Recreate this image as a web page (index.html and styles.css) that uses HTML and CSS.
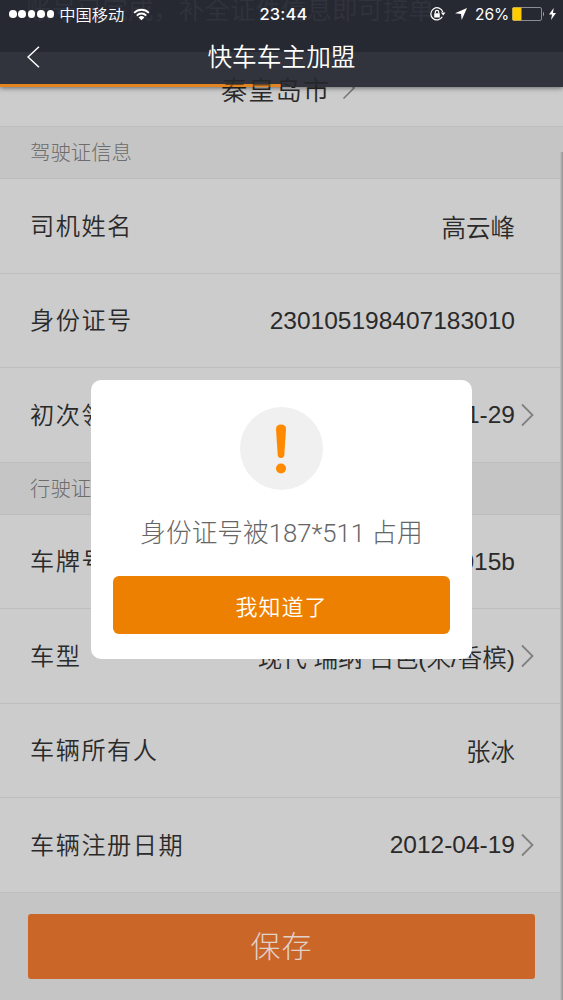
FILE: index.html
```html
<!DOCTYPE html>
<html lang="zh-CN">
<head>
<meta charset="utf-8">
<title>快车车主加盟</title>
<link rel="stylesheet" href="styles.css">
</head>
<body>
<div class="screen">
  <main class="page">
    <div class="city"><span>秦皇岛市</span><svg class="city-arrow" viewBox="0 0 14 24"><path d="M1.5 1.500 12 12 1.500 22.500"/></svg></div>
    <h2 class="section">驾驶证信息</h2>
    <div class="row"><span class="label">司机姓名</span><span class="value">高云峰</span></div>
    <div class="row"><span class="label">身份证号</span><span class="value">230105198407183010</span></div>
    <div class="row last"><span class="label">初次领证</span><span class="value">2011-01-29</span><svg class="arrow" viewBox="0 0 13 24"><path d="M1 1.500 11.500 12 1 22.500"/></svg></div>
    <h2 class="section">行驶证信息</h2>
    <div class="row"><span class="label">车牌号</span><span class="value">c8015b</span></div>
    <div class="row"><span class="label">车型</span><span class="value">现代 瑞纳 白色(米/香槟)</span><svg class="arrow" viewBox="0 0 13 24"><path d="M1 1.500 11.500 12 1 22.500"/></svg></div>
    <div class="row"><span class="label">车辆所有人</span><span class="value">张冰</span></div>
    <div class="row last"><span class="label">车辆注册日期</span><span class="value">2012-04-19</span><svg class="arrow" viewBox="0 0 13 24"><path d="M1 1.500 11.500 12 1 22.500"/></svg></div>
    <div class="footer"><button class="save">保存</button></div>
  </main>

  <header class="header">
    <p class="banner">账号已完成，补全证件信息即可接单</p>
    <div class="status">
      <span class="dots"><i></i><i></i><i></i><i></i><i></i></span>
      <span class="carrier">中国移动</span>
      <svg class="wifi" viewBox="0 0 18 13"><path d="M1.200 4.700a11 11 0 0 1 15.600 0M4 7.600a7 7 0 0 1 10 0"/><path class="fill" d="M9 12.700 5.900 9.600a4.400 4.400 0 0 1 6.200 0z"/></svg>
      <span class="time">23:44</span>
      <span class="right">
        <svg class="lock" viewBox="0 0 16 14"><path d="M12.800 5A6.100 6.100 0 1 0 12.300 9.800"/><path class="fill" d="M10.800 5.600h4.700l-2.300 3zM4.200 6.300h5.600v4.100H4.200z"/><path d="M5.300 6.300V5a1.700 1.700 0 0 1 3.400 0v1.300"/></svg>
        <svg class="locate" viewBox="0 0 12 12"><path d="M12 0 6.700 12 6 6 0 5.200z"/></svg>
        <span class="percent">26%</span>
        <svg class="battery" viewBox="0 0 33 14"><rect class="shell" x=".5" y=".5" width="29" height="13" rx="1.500"/><rect class="charge" x=".5" y=".5" width="9" height="13" rx="1"/><path class="cap" d="M31 4.500q2 2.500 0 5z"/></svg>
        <svg class="bolt" viewBox="0 0 7 12"><path d="M4.700 0 0 6.600h3L2 12l5-7H4z"/></svg>
      </span>
    </div>
    <div class="nav">
      <svg class="back" viewBox="0 0 13 22"><path d="M12 .8 1 11 12 21.200"/></svg>
      <h1 class="title">快车车主加盟</h1>
    </div>
    <div class="progress"></div>
    <span class="city-ghost">秦皇岛市</span>
  </header>

  <section class="dialog" role="alertdialog">
    <div class="badge"><svg class="mark" viewBox="0 0 12 50"><path d="M1 5q0-4.500 5-4.500T11 5L9.300 31q-.3 3-3.300 3t-3.300-3z"/><circle cx="6" cy="44.500" r="5"/></svg></div>
    <p class="message">身份证号被187*511 占用</p>
    <button class="confirm">我知道了</button>
  </section>
</div>
</body>
</html>
```
FILE: styles.css
```css
* { box-sizing: border-box; margin: 0; padding: 0; }
body { font-family: "Liberation Sans", "Noto Sans CJK SC", sans-serif; color: #2a2a2a; }
svg { display: block; fill: none; stroke-width: 1.5; flex: none; }
button { border: 0; font-family: inherit; display: block; }
.screen { position: relative; width: 563px; height: 1000px; overflow: hidden; background: #c5c5c5; }
.page { height: 1000px; display: flex; flex-direction: column; }
.page::after { content: ""; position: absolute; right: 0; top: 152px; bottom: 0; width: 3px; background: linear-gradient(90deg, #c2c2c2, #929292); }
.city { height: 127px; padding: 73px 0 0 221px; display: flex; gap: 12px; background: #ccc; border-bottom: 1px solid #bebebe; font-size: 26.300px; line-height: 36px; font-weight: 350; letter-spacing: 1px; }
.city-arrow { width: 14px; height: 24px; margin-top: 3px; stroke: #777; }
.section { height: 52px; padding-left: 30px; border-bottom: 1px solid #bcbcbc; font-size: 20.400px; line-height: 52px; font-weight: 300; color: #6c6c6c; }
.row { height: 94.500px; position: relative; display: flex; align-items: center; justify-content: space-between; padding: 0 48px 0 30px; background: #ccc; border-bottom: 1px solid #bebebe; font-weight: 350; }
.label { font-size: 24.200px; letter-spacing: 1.500px; padding-bottom: 3px; }
.value { font-size: 24.500px; white-space: nowrap; padding-top: 1px; }
.arrow { position: absolute; right: 29px; top: 35px; width: 13px; height: 24px; stroke: #808080; stroke-width: 1.800; }
.footer { flex: 1; padding: 21px 28px 0; }
.save { width: 507px; height: 65px; padding-bottom: 5px; border-radius: 3px; background: #cb6629; color: #e0d2c9; font-size: 30px; font-weight: 300; letter-spacing: 1px; }
.header { position: absolute; inset: 0 0 auto; height: 87px; background: linear-gradient(#262932 52px, #31343d 52px); box-shadow: 0 1px 5px rgba(0,0,0,.5); color: #fff; }
.banner { position: absolute; left: 26px; top: -8px; font-size: 25.500px; line-height: 36px; white-space: nowrap; color: #30333c; font-weight: 350; }
.status { position: relative; height: 28px; display: flex; align-items: center; padding: 0 7px 0 9px; font-size: 16px; }
.dots { display: flex; gap: 1.800px; }
.dots i { width: 7.600px; height: 7.600px; border-radius: 50%; background: #fff; }
.carrier { margin-left: 5px; font-size: 16.300px; font-weight: 350; padding-bottom: 1px; }
.wifi { width: 17px; height: 13px; margin-left: 9px; stroke: #fff; stroke-width: 2; }
.wifi .fill, .lock .fill { fill: #fff; stroke: none; }
.time { position: absolute; left: 0; right: 0; text-align: center; font: 500 16.500px Inter, sans-serif; letter-spacing: .2px; padding-left: 4px; }
.right { margin-left: auto; display: flex; align-items: center; }
.lock { width: 16px; height: 14px; stroke: #fff; stroke-width: 1.200; }
.locate { width: 12px; height: 12px; margin-left: 9px; fill: #fff; }
.percent { margin-left: 8px; width: 34px; font: 400 15.500px Inter, sans-serif; white-space: nowrap; }
.battery { width: 33px; height: 14px; margin-left: 3px; }
.shell { stroke: #8b8d92; stroke-width: 1; }
.charge { fill: #fc0; }
.cap { fill: #aaa; }
.bolt { width: 7px; height: 12px; margin-left: 4px; fill: #fff; }
.nav { position: relative; height: 57px; display: flex; align-items: center; }
.back { width: 13px; height: 22px; margin-left: 27px; stroke: #fff; }
.title { position: absolute; left: 0; right: 0; text-align: center; padding-bottom: 3px; font-size: 24.700px; font-weight: 350; }
.progress { position: absolute; left: 0; bottom: 0; width: 281px; height: 3px; background: #e28420; }
.city-ghost { position: absolute; left: 221px; top: 73px; height: 14px; overflow: hidden; font-size: 26.300px; line-height: 36px; font-weight: 350; letter-spacing: 1px; color: rgba(30,30,30,.6); }
.dialog { position: absolute; left: 91px; top: 380px; width: 381px; height: 279px; border-radius: 10px; background: #fff; padding: 27px 22px 0; }
.badge { width: 83px; height: 83px; margin: 0 auto; padding-right: 2px; border-radius: 50%; background: #f0f0f0; display: flex; align-items: center; justify-content: center; }
.mark { width: 12px; height: 50px; fill: #ff8a00; }
.message { margin-top: 24px; text-align: center; font-family: Roboto, "Noto Sans CJK SC", sans-serif; font-size: 25.700px; line-height: 38px; font-weight: 300; color: #666; white-space: nowrap; }
.confirm { margin-top: 24px; width: 337px; height: 58px; padding-bottom: 1px; border-radius: 6px; background: #ed8000; color: #fff; font-size: 22px; font-weight: 350; letter-spacing: 1px; }
```
